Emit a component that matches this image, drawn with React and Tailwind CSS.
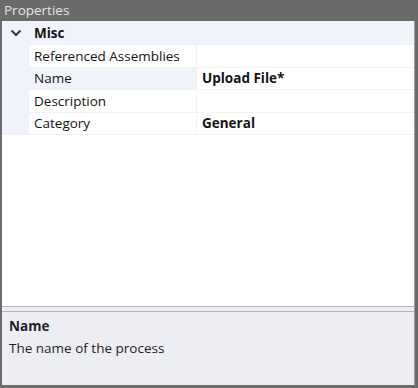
export default function App() {
  const rows = [
    { label: 'Referenced Assemblies', value: '' },
    { label: 'Name', value: 'Upload File*', selected: true },
    { label: 'Description', value: '' },
    { label: 'Category', value: 'General' },
  ]

  return (
    <div
      className="w-[418px] h-[388px] bg-[#6b6b6b] flex flex-col pl-[2px] pr-[3px] pb-[3px] text-[13.5px] text-[#141414]"
      style={{ fontFamily: '"Open Sans", "Noto Sans", sans-serif' }}
    >
      {/* title */}
      <div className="h-[21px] flex items-center pl-[2px] text-[13.5px] text-[#e4e4e4]">Properties</div>

      <div className="flex-1 flex flex-col bg-white border-r border-[#a0a0a0]">
        {/* grid */}
        <div className="h-[285px] bg-white">
          <div className="h-[24px] flex items-center bg-[#f0f4fa]">
            <div className="w-[27px] flex justify-center">
              <svg width="12" height="8" viewBox="0 0 12 8">
                <path d="M1.5 1.5 L6 6 L10.5 1.5" fill="none" stroke="#3a3a3a" strokeWidth="2" />
              </svg>
            </div>
            <span className="font-bold pl-[5px]">Misc</span>
          </div>
          {rows.map((r) => (
            <div key={r.label} className="h-[22.5px] flex">
              <div className="w-[27px] bg-[#f0f4fa]" />
              <div
                className={`w-[168px] flex items-center pl-[5px] border-b border-r border-[#f0f2f5] ${
                  r.selected ? 'bg-[#f0f4fa]' : 'bg-white'
                }`}
              >
                {r.label}
              </div>
              <div className="flex-1 flex items-center pl-[5px] font-bold border-b border-[#f0f2f5]">{r.value}</div>
            </div>
          ))}
        </div>

        {/* splitter */}
        <div className="h-[6px] bg-[#edeef3] border-y border-[#b8b8bc]" />

        {/* description */}
        <div className="flex-1 bg-[#edeef3] pl-[7px] pt-[4px] text-[#1e1e28]">
          <div className="font-bold leading-[20px]">Name</div>
          <div className="mt-[2px] leading-[20px]">The name of the process</div>
        </div>
      </div>
    </div>
  )
}
